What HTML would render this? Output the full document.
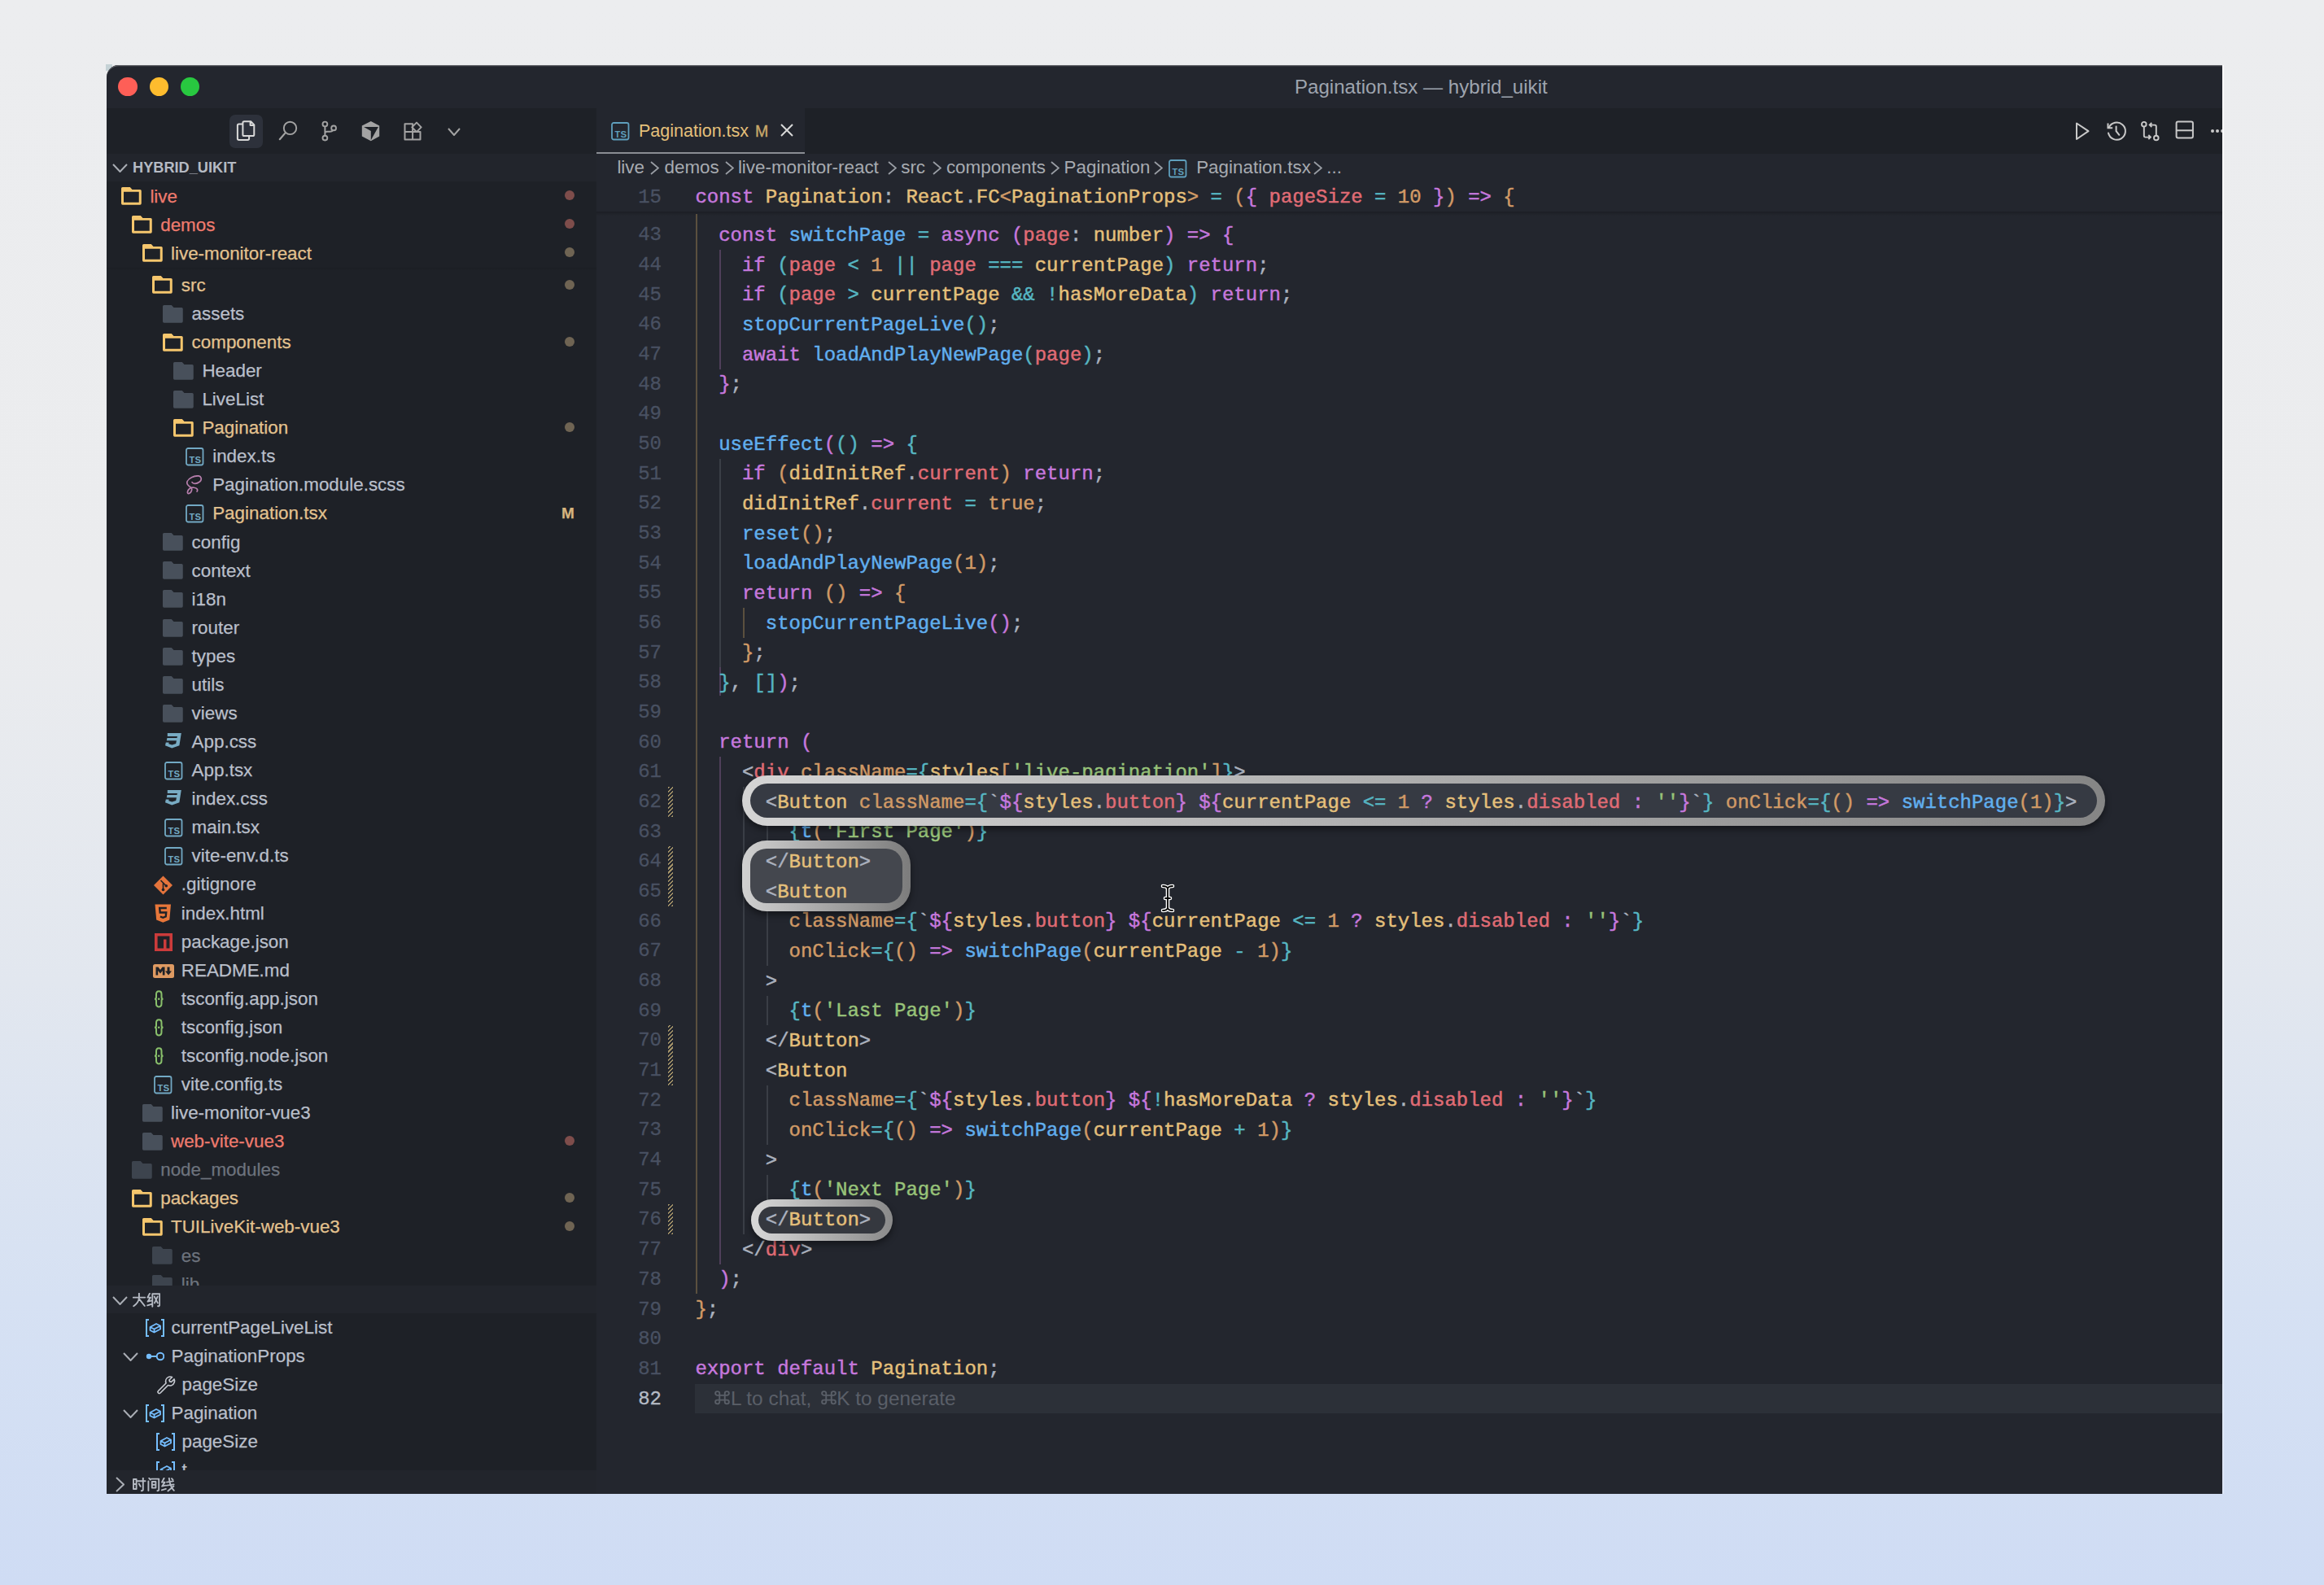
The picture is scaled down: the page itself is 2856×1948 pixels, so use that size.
<!DOCTYPE html><html><head><meta charset="utf-8"><style>
*{margin:0;padding:0;box-sizing:border-box}
html,body{width:2856px;height:1948px;overflow:hidden}
body{position:relative;background:linear-gradient(180deg,#ecedef 0%,#ebecee 38%,#e2e7ef 62%,#d6e1f3 82%,#cfdcf4 100%);font-family:"Liberation Sans",sans-serif}
.a{position:absolute}
.code{position:absolute;left:854.4px;height:36.67px;line-height:36.67px;margin-top:1.7px;font-family:"Liberation Mono",monospace;font-size:24px;white-space:pre;color:#abb2bf;-webkit-text-stroke:0.45px currentColor}
.ln{position:absolute;left:713px;width:100px;text-align:right;height:36.67px;line-height:36.67px;margin-top:1.2px;-webkit-text-stroke:0.3px currentColor;font-family:"Liberation Mono",monospace;font-size:24px;color:#495162}
.row{position:absolute;height:35.2px;line-height:35.2px;font-size:22.4px;white-space:pre;color:#abb2bf;-webkit-text-stroke:0.25px currentColor}
.dot{position:absolute;width:12px;height:12px;border-radius:6px}
.guide{position:absolute;width:2px}
.code b{display:inline-block;width:14.4px;font-weight:normal}
.hatch{position:absolute;left:821px;width:5.5px;background:repeating-linear-gradient(-45deg,rgba(205,182,124,0.75) 0 1.6px,rgba(0,0,0,0) 1.6px 3.6px)}
.kw{color:#c678dd}.fn{color:#61afef}.va{color:#e06c75}.ty{color:#e5c07b}.op{color:#56b6c2}.nu{color:#d19a66}.st{color:#98c379}.pu{color:#abb2bf}.b1{color:#d19a66}.b2{color:#c678dd}.b3{color:#56b6c2}.sp{color:#abb2bf}.or{color:#d19a66}</style></head><body><div class="a" style="left:130px;top:79px;width:8px;height:8px;background:#c5d2d6"></div><div class="a" style="left:2731px;top:80px;width:1.5px;height:1756px;background:linear-gradient(rgba(255,255,255,0.75),rgba(255,255,255,0.25))"></div><div class="a" style="left:131px;top:80px;width:2600px;height:1755.7px;background:#23262e;border-top-left-radius:15px;overflow:hidden"></div><div class="a" style="left:131px;top:80px;width:2600px;height:53px;background:#23262e;border-top-left-radius:15px;box-shadow:inset 0 1.2px 0 rgba(150,150,155,0.55)"></div><div class="a" style="left:145.4px;top:94.60000000000001px;width:23.2px;height:23.2px;border-radius:50%;background:#fe5f57"></div><div class="a" style="left:183.9px;top:94.60000000000001px;width:23.2px;height:23.2px;border-radius:50%;background:#febc2e"></div><div class="a" style="left:222.0px;top:94.60000000000001px;width:23.2px;height:23.2px;border-radius:50%;background:#28c840"></div><div class="a" style="left:1591px;top:92px;height:30px;line-height:30px;font-size:24.1px;color:#9ea4ae;white-space:pre">Pagination.tsx — hybrid_uikit</div><div class="a" style="left:131px;top:133px;width:602px;height:1702.7px;background:#1e2127"></div><div class="a" style="left:131px;top:189px;width:602px;height:34px;background:#22252c"></div><div class="a" style="left:163px;top:189px;height:34px;line-height:34px;font-size:18.2px;font-weight:bold;color:#b5bac3">HYBRID_UIKIT</div><div class="a" style="left:131px;top:223px;width:602px;height:1356.5px;overflow:hidden"><div class="a" style="left:-131px;top:-223px;width:2856px;height:1948px"><svg class="a" style="left:187.3px;top:339.40000000000003px" width="25" height="22" viewBox="0 0 25 22"><path fill="#f5c66d" fill-rule="evenodd" d="M1.6 0H10.8L13.5 3H23.1Q24.75 3 24.75 4.6V20.1Q24.75 21.7 23.1 21.7H1.6Q0 21.7 0 20.1V1.6Q0 0 1.6 0Z M3 5.8H21.75V18.7H3Z"/></svg><div class="row" style="left:222.8px;top:332.80px;color:#e3c28f">src</div><div class="dot" style="left:693.7px;top:343.60px;background:#6f6453"></div><svg class="a" style="left:200.10000000000002px;top:374.68px" width="25" height="22" viewBox="0 0 25 22"><path fill="#48505b" d="M1.6 0H10.8L13.5 3H23.1Q24.75 3 24.75 4.6V20.1Q24.75 21.7 23.1 21.7H1.6Q0 21.7 0 20.1V1.6Q0 0 1.6 0Z"/></svg><div class="row" style="left:235.6px;top:367.88px;color:#b9bfca">assets</div><svg class="a" style="left:200.10000000000002px;top:409.56000000000006px" width="25" height="22" viewBox="0 0 25 22"><path fill="#f5c66d" fill-rule="evenodd" d="M1.6 0H10.8L13.5 3H23.1Q24.75 3 24.75 4.6V20.1Q24.75 21.7 23.1 21.7H1.6Q0 21.7 0 20.1V1.6Q0 0 1.6 0Z M3 5.8H21.75V18.7H3Z"/></svg><div class="row" style="left:235.6px;top:402.96px;color:#e3c28f">components</div><div class="dot" style="left:693.7px;top:413.76px;background:#6f6453"></div><svg class="a" style="left:212.9px;top:444.84000000000003px" width="25" height="22" viewBox="0 0 25 22"><path fill="#48505b" d="M1.6 0H10.8L13.5 3H23.1Q24.75 3 24.75 4.6V20.1Q24.75 21.7 23.1 21.7H1.6Q0 21.7 0 20.1V1.6Q0 0 1.6 0Z"/></svg><div class="row" style="left:248.4px;top:438.04px;color:#b9bfca">Header</div><svg class="a" style="left:212.9px;top:479.92px" width="25" height="22" viewBox="0 0 25 22"><path fill="#48505b" d="M1.6 0H10.8L13.5 3H23.1Q24.75 3 24.75 4.6V20.1Q24.75 21.7 23.1 21.7H1.6Q0 21.7 0 20.1V1.6Q0 0 1.6 0Z"/></svg><div class="row" style="left:248.4px;top:473.12px;color:#b9bfca">LiveList</div><svg class="a" style="left:212.9px;top:514.8px" width="25" height="22" viewBox="0 0 25 22"><path fill="#f5c66d" fill-rule="evenodd" d="M1.6 0H10.8L13.5 3H23.1Q24.75 3 24.75 4.6V20.1Q24.75 21.7 23.1 21.7H1.6Q0 21.7 0 20.1V1.6Q0 0 1.6 0Z M3 5.8H21.75V18.7H3Z"/></svg><div class="row" style="left:248.4px;top:508.20px;color:#e3c28f">Pagination</div><div class="dot" style="left:693.7px;top:519.00px;background:#6f6453"></div><svg class="a" style="left:227.50000000000003px;top:550.28px" width="23" height="23" viewBox="0 0 23 23"><rect x="1" y="1" width="20.5" height="20.5" rx="2.2" fill="none" stroke="#72a9c4" stroke-width="1.8"/><text x="4.6" y="18.6" font-family="Liberation Sans" font-weight="bold" font-size="11" fill="#72a9c4">T</text><text x="11.4" y="18.8" font-family="Liberation Sans" font-weight="bold" font-size="11.4" fill="#72a9c4">S</text></svg><div class="row" style="left:261.2px;top:543.28px;color:#b9bfca">index.ts</div><svg class="a" style="left:229.3px;top:584.36px" width="21" height="24" viewBox="0 0 21 24"><path fill="none" stroke="#b67eac" stroke-width="1.7" stroke-linecap="round" d="M7 8.7C8 10.5 12 11.5 16.5 8C19.5 5.5 18.5 0.8 14.5 0.8C9 0.8 3 3.5 1.2 7.5C-0.2 10.5 3 13.5 5.5 15C8 16.5 6 22.5 2.8 22.7C0.7 22.8 0.9 19 4 16.5C7 14.5 12 15 13.2 17C13.8 18 13.5 19.5 13.1 20.1"/></svg><div class="row" style="left:261.2px;top:578.36px;color:#b9bfca">Pagination.module.scss</div><svg class="a" style="left:227.50000000000003px;top:620.44px" width="23" height="23" viewBox="0 0 23 23"><rect x="1" y="1" width="20.5" height="20.5" rx="2.2" fill="none" stroke="#72a9c4" stroke-width="1.8"/><text x="4.6" y="18.6" font-family="Liberation Sans" font-weight="bold" font-size="11" fill="#72a9c4">T</text><text x="11.4" y="18.8" font-family="Liberation Sans" font-weight="bold" font-size="11.4" fill="#72a9c4">S</text></svg><div class="row" style="left:261.2px;top:613.44px;color:#e3c28f">Pagination.tsx</div><div class="row" style="left:690px;top:613.44px;color:#d6b57e;font-weight:bold;font-size:19px">M</div><svg class="a" style="left:200.10000000000002px;top:655.3199999999999px" width="25" height="22" viewBox="0 0 25 22"><path fill="#48505b" d="M1.6 0H10.8L13.5 3H23.1Q24.75 3 24.75 4.6V20.1Q24.75 21.7 23.1 21.7H1.6Q0 21.7 0 20.1V1.6Q0 0 1.6 0Z"/></svg><div class="row" style="left:235.6px;top:648.52px;color:#b9bfca">config</div><svg class="a" style="left:200.10000000000002px;top:690.3999999999999px" width="25" height="22" viewBox="0 0 25 22"><path fill="#48505b" d="M1.6 0H10.8L13.5 3H23.1Q24.75 3 24.75 4.6V20.1Q24.75 21.7 23.1 21.7H1.6Q0 21.7 0 20.1V1.6Q0 0 1.6 0Z"/></svg><div class="row" style="left:235.6px;top:683.60px;color:#b9bfca">context</div><svg class="a" style="left:200.10000000000002px;top:725.48px" width="25" height="22" viewBox="0 0 25 22"><path fill="#48505b" d="M1.6 0H10.8L13.5 3H23.1Q24.75 3 24.75 4.6V20.1Q24.75 21.7 23.1 21.7H1.6Q0 21.7 0 20.1V1.6Q0 0 1.6 0Z"/></svg><div class="row" style="left:235.6px;top:718.68px;color:#b9bfca">i18n</div><svg class="a" style="left:200.10000000000002px;top:760.56px" width="25" height="22" viewBox="0 0 25 22"><path fill="#48505b" d="M1.6 0H10.8L13.5 3H23.1Q24.75 3 24.75 4.6V20.1Q24.75 21.7 23.1 21.7H1.6Q0 21.7 0 20.1V1.6Q0 0 1.6 0Z"/></svg><div class="row" style="left:235.6px;top:753.76px;color:#b9bfca">router</div><svg class="a" style="left:200.10000000000002px;top:795.6399999999999px" width="25" height="22" viewBox="0 0 25 22"><path fill="#48505b" d="M1.6 0H10.8L13.5 3H23.1Q24.75 3 24.75 4.6V20.1Q24.75 21.7 23.1 21.7H1.6Q0 21.7 0 20.1V1.6Q0 0 1.6 0Z"/></svg><div class="row" style="left:235.6px;top:788.84px;color:#b9bfca">types</div><svg class="a" style="left:200.10000000000002px;top:830.72px" width="25" height="22" viewBox="0 0 25 22"><path fill="#48505b" d="M1.6 0H10.8L13.5 3H23.1Q24.75 3 24.75 4.6V20.1Q24.75 21.7 23.1 21.7H1.6Q0 21.7 0 20.1V1.6Q0 0 1.6 0Z"/></svg><div class="row" style="left:235.6px;top:823.92px;color:#b9bfca">utils</div><svg class="a" style="left:200.10000000000002px;top:865.8px" width="25" height="22" viewBox="0 0 25 22"><path fill="#48505b" d="M1.6 0H10.8L13.5 3H23.1Q24.75 3 24.75 4.6V20.1Q24.75 21.7 23.1 21.7H1.6Q0 21.7 0 20.1V1.6Q0 0 1.6 0Z"/></svg><div class="row" style="left:235.6px;top:859.00px;color:#b9bfca">views</div><svg class="a" style="left:203.10000000000002px;top:900.9799999999999px" width="20" height="19" viewBox="0 0 20 19"><path fill="#78abc3" d="M2.8 0H19.8L17.4 15.3L8.3 18.6L0 15.3L0.8 11.5H4.6L4.3 13.2L8.4 14.6L13.2 13.1L13.9 9.3H1.8L2.4 5.9H14.5L14.9 3.9H2.8Z"/></svg><div class="row" style="left:235.6px;top:894.08px;color:#b9bfca">App.css</div><svg class="a" style="left:201.90000000000003px;top:936.1600000000001px" width="23" height="23" viewBox="0 0 23 23"><rect x="1" y="1" width="20.5" height="20.5" rx="2.2" fill="none" stroke="#72a9c4" stroke-width="1.8"/><text x="4.6" y="18.6" font-family="Liberation Sans" font-weight="bold" font-size="11" fill="#72a9c4">T</text><text x="11.4" y="18.8" font-family="Liberation Sans" font-weight="bold" font-size="11.4" fill="#72a9c4">S</text></svg><div class="row" style="left:235.6px;top:929.16px;color:#b9bfca">App.tsx</div><svg class="a" style="left:203.10000000000002px;top:971.14px" width="20" height="19" viewBox="0 0 20 19"><path fill="#78abc3" d="M2.8 0H19.8L17.4 15.3L8.3 18.6L0 15.3L0.8 11.5H4.6L4.3 13.2L8.4 14.6L13.2 13.1L13.9 9.3H1.8L2.4 5.9H14.5L14.9 3.9H2.8Z"/></svg><div class="row" style="left:235.6px;top:964.24px;color:#b9bfca">index.css</div><svg class="a" style="left:201.90000000000003px;top:1006.3199999999999px" width="23" height="23" viewBox="0 0 23 23"><rect x="1" y="1" width="20.5" height="20.5" rx="2.2" fill="none" stroke="#72a9c4" stroke-width="1.8"/><text x="4.6" y="18.6" font-family="Liberation Sans" font-weight="bold" font-size="11" fill="#72a9c4">T</text><text x="11.4" y="18.8" font-family="Liberation Sans" font-weight="bold" font-size="11.4" fill="#72a9c4">S</text></svg><div class="row" style="left:235.6px;top:999.32px;color:#b9bfca">main.tsx</div><svg class="a" style="left:201.90000000000003px;top:1041.3999999999999px" width="23" height="23" viewBox="0 0 23 23"><rect x="1" y="1" width="20.5" height="20.5" rx="2.2" fill="none" stroke="#72a9c4" stroke-width="1.8"/><text x="4.6" y="18.6" font-family="Liberation Sans" font-weight="bold" font-size="11" fill="#72a9c4">T</text><text x="11.4" y="18.8" font-family="Liberation Sans" font-weight="bold" font-size="11.4" fill="#72a9c4">S</text></svg><div class="row" style="left:235.6px;top:1034.40px;color:#b9bfca">vite-env.d.ts</div><svg class="a" style="left:189.10000000000002px;top:1076.18px" width="23" height="24" viewBox="0 0 23 24"><path fill="#e4743c" d="M11.5 0.5L23 12L11.5 23.5L0 12Z"/><path fill="none" stroke="#1e2127" stroke-width="1.6" d="M8.5 6L11.5 9V17M11.5 9L15 12.5"/><circle cx="11.5" cy="17.5" r="1.8" fill="#1e2127"/><circle cx="15.3" cy="12.8" r="1.8" fill="#1e2127"/></svg><div class="row" style="left:222.8px;top:1069.48px;color:#b9bfca">.gitignore</div><svg class="a" style="left:190.10000000000002px;top:1110.96px" width="21" height="23" viewBox="0 0 21 23"><path fill="#e8773a" d="M0.5 0.5H20L18.3 19.5L10.3 22.7L2.2 19.5Z"/><path fill="none" stroke="#1e2127" stroke-width="2.4" d="M14.8 5H6.2L6.7 10.5H14.2L13.7 15.5L10.3 16.8L6.9 15.5"/></svg><div class="row" style="left:222.8px;top:1104.56px;color:#b9bfca">index.html</div><svg class="a" style="left:189.9px;top:1147.09px" width="22" height="22" viewBox="0 0 22 22"><rect x="0" y="0" width="22" height="22" fill="#cc3b3b"/><path fill="#1e2127" d="M3.6 3.6H18.4V18.4H14.5V7.5H11V18.4H3.6Z"/></svg><div class="row" style="left:222.8px;top:1139.64px;color:#b9bfca">package.json</div><svg class="a" style="left:187.70000000000002px;top:1185.32px" width="26" height="17" viewBox="0 0 26 17"><rect x="0" y="0" width="26" height="17" rx="2.5" fill="#de9a62"/><path fill="#1e2127" d="M3.5 13.5V3.5H6.5L9 7L11.5 3.5H14.5V13.5H11.8V8L9 11.5L6.2 8V13.5Z"/><path fill="#1e2127" d="M17.5 3.5H20.5V8.5H23L19 13.5L15 8.5H17.5Z"/></svg><div class="row" style="left:222.8px;top:1174.72px;color:#b9bfca">README.md</div><svg class="a" style="left:188.60000000000002px;top:1216.75px" width="13" height="22" viewBox="0 0 13 22"><path fill="none" stroke="#89c06b" stroke-width="2" d="M6.2 1.2C3.5 1.2 3 2.5 3 5V8.5C3 9.8 2 10.8 1 10.8C2 10.8 3 11.8 3 13.1V16.6C3 19.2 3.5 20.4 6.2 20.4C9 20.4 9.5 19.2 9.5 16.6V13.1C9.5 11.8 10.5 10.8 11.5 10.8C10.5 10.8 9.5 9.8 9.5 8.5V5C9.5 2.5 9 1.2 6.2 1.2Z"/><circle cx="6.2" cy="10.8" r="1.3" fill="#89c06b"/></svg><div class="row" style="left:222.8px;top:1209.80px;color:#b9bfca">tsconfig.app.json</div><svg class="a" style="left:188.60000000000002px;top:1251.83px" width="13" height="22" viewBox="0 0 13 22"><path fill="none" stroke="#89c06b" stroke-width="2" d="M6.2 1.2C3.5 1.2 3 2.5 3 5V8.5C3 9.8 2 10.8 1 10.8C2 10.8 3 11.8 3 13.1V16.6C3 19.2 3.5 20.4 6.2 20.4C9 20.4 9.5 19.2 9.5 16.6V13.1C9.5 11.8 10.5 10.8 11.5 10.8C10.5 10.8 9.5 9.8 9.5 8.5V5C9.5 2.5 9 1.2 6.2 1.2Z"/><circle cx="6.2" cy="10.8" r="1.3" fill="#89c06b"/></svg><div class="row" style="left:222.8px;top:1244.88px;color:#b9bfca">tsconfig.json</div><svg class="a" style="left:188.60000000000002px;top:1286.91px" width="13" height="22" viewBox="0 0 13 22"><path fill="none" stroke="#89c06b" stroke-width="2" d="M6.2 1.2C3.5 1.2 3 2.5 3 5V8.5C3 9.8 2 10.8 1 10.8C2 10.8 3 11.8 3 13.1V16.6C3 19.2 3.5 20.4 6.2 20.4C9 20.4 9.5 19.2 9.5 16.6V13.1C9.5 11.8 10.5 10.8 11.5 10.8C10.5 10.8 9.5 9.8 9.5 8.5V5C9.5 2.5 9 1.2 6.2 1.2Z"/><circle cx="6.2" cy="10.8" r="1.3" fill="#89c06b"/></svg><div class="row" style="left:222.8px;top:1279.96px;color:#b9bfca">tsconfig.node.json</div><svg class="a" style="left:189.10000000000002px;top:1322.04px" width="23" height="23" viewBox="0 0 23 23"><rect x="1" y="1" width="20.5" height="20.5" rx="2.2" fill="none" stroke="#72a9c4" stroke-width="1.8"/><text x="4.6" y="18.6" font-family="Liberation Sans" font-weight="bold" font-size="11" fill="#72a9c4">T</text><text x="11.4" y="18.8" font-family="Liberation Sans" font-weight="bold" font-size="11.4" fill="#72a9c4">S</text></svg><div class="row" style="left:222.8px;top:1315.04px;color:#b9bfca">vite.config.ts</div><svg class="a" style="left:174.5px;top:1356.9199999999998px" width="25" height="22" viewBox="0 0 25 22"><path fill="#48505b" d="M1.6 0H10.8L13.5 3H23.1Q24.75 3 24.75 4.6V20.1Q24.75 21.7 23.1 21.7H1.6Q0 21.7 0 20.1V1.6Q0 0 1.6 0Z"/></svg><div class="row" style="left:210.0px;top:1350.12px;color:#b9bfca">live-monitor-vue3</div><svg class="a" style="left:174.5px;top:1391.9999999999998px" width="25" height="22" viewBox="0 0 25 22"><path fill="#48505b" d="M1.6 0H10.8L13.5 3H23.1Q24.75 3 24.75 4.6V20.1Q24.75 21.7 23.1 21.7H1.6Q0 21.7 0 20.1V1.6Q0 0 1.6 0Z"/></svg><div class="row" style="left:210.0px;top:1385.20px;color:#ef7b6e">web-vite-vue3</div><div class="dot" style="left:693.7px;top:1396.00px;background:#7e4d4b"></div><svg class="a" style="left:161.70000000000002px;top:1427.08px" width="25" height="22" viewBox="0 0 25 22"><path fill="#3d444e" d="M1.6 0H10.8L13.5 3H23.1Q24.75 3 24.75 4.6V20.1Q24.75 21.7 23.1 21.7H1.6Q0 21.7 0 20.1V1.6Q0 0 1.6 0Z"/></svg><div class="row" style="left:197.2px;top:1420.28px;color:#6d737d">node_modules</div><svg class="a" style="left:161.70000000000002px;top:1461.9599999999998px" width="25" height="22" viewBox="0 0 25 22"><path fill="#f5c66d" fill-rule="evenodd" d="M1.6 0H10.8L13.5 3H23.1Q24.75 3 24.75 4.6V20.1Q24.75 21.7 23.1 21.7H1.6Q0 21.7 0 20.1V1.6Q0 0 1.6 0Z M3 5.8H21.75V18.7H3Z"/></svg><div class="row" style="left:197.2px;top:1455.36px;color:#e3c28f">packages</div><div class="dot" style="left:693.7px;top:1466.16px;background:#6f6453"></div><svg class="a" style="left:174.5px;top:1497.0399999999997px" width="25" height="22" viewBox="0 0 25 22"><path fill="#f5c66d" fill-rule="evenodd" d="M1.6 0H10.8L13.5 3H23.1Q24.75 3 24.75 4.6V20.1Q24.75 21.7 23.1 21.7H1.6Q0 21.7 0 20.1V1.6Q0 0 1.6 0Z M3 5.8H21.75V18.7H3Z"/></svg><div class="row" style="left:210.0px;top:1490.44px;color:#e3c28f">TUILiveKit-web-vue3</div><div class="dot" style="left:693.7px;top:1501.24px;background:#6f6453"></div><svg class="a" style="left:187.3px;top:1532.32px" width="25" height="22" viewBox="0 0 25 22"><path fill="#3d444e" d="M1.6 0H10.8L13.5 3H23.1Q24.75 3 24.75 4.6V20.1Q24.75 21.7 23.1 21.7H1.6Q0 21.7 0 20.1V1.6Q0 0 1.6 0Z"/></svg><div class="row" style="left:222.8px;top:1525.52px;color:#6d737d">es</div><svg class="a" style="left:187.3px;top:1567.3999999999999px" width="25" height="22" viewBox="0 0 25 22"><path fill="#3d444e" d="M1.6 0H10.8L13.5 3H23.1Q24.75 3 24.75 4.6V20.1Q24.75 21.7 23.1 21.7H1.6Q0 21.7 0 20.1V1.6Q0 0 1.6 0Z"/></svg><div class="row" style="left:222.8px;top:1560.60px;color:#6d737d">lib</div><div class="a" style="left:131px;top:223px;width:602px;height:110.64999999999999px;background:#1e2127"></div><div class="a" style="left:131px;top:328.65px;width:602px;height:3px;background:linear-gradient(rgba(20,22,26,0.25),rgba(22,24,28,0))"></div><svg class="a" style="left:148.9px;top:230.1px" width="25" height="22" viewBox="0 0 25 22"><path fill="#f5c66d" fill-rule="evenodd" d="M1.6 0H10.8L13.5 3H23.1Q24.75 3 24.75 4.6V20.1Q24.75 21.7 23.1 21.7H1.6Q0 21.7 0 20.1V1.6Q0 0 1.6 0Z M3 5.8H21.75V18.7H3Z"/></svg><div class="row" style="left:184.4px;top:223.50px;color:#ef7b6e">live</div><div class="dot" style="left:693.7px;top:234.30px;background:#7e4d4b"></div><svg class="a" style="left:161.70000000000002px;top:265.15000000000003px" width="25" height="22" viewBox="0 0 25 22"><path fill="#f5c66d" fill-rule="evenodd" d="M1.6 0H10.8L13.5 3H23.1Q24.75 3 24.75 4.6V20.1Q24.75 21.7 23.1 21.7H1.6Q0 21.7 0 20.1V1.6Q0 0 1.6 0Z M3 5.8H21.75V18.7H3Z"/></svg><div class="row" style="left:197.2px;top:258.55px;color:#ef7b6e">demos</div><div class="dot" style="left:693.7px;top:269.35px;background:#7e4d4b"></div><svg class="a" style="left:174.5px;top:300.20000000000005px" width="25" height="22" viewBox="0 0 25 22"><path fill="#f5c66d" fill-rule="evenodd" d="M1.6 0H10.8L13.5 3H23.1Q24.75 3 24.75 4.6V20.1Q24.75 21.7 23.1 21.7H1.6Q0 21.7 0 20.1V1.6Q0 0 1.6 0Z M3 5.8H21.75V18.7H3Z"/></svg><div class="row" style="left:210.0px;top:293.60px;color:#e3c28f">live-monitor-react</div><div class="dot" style="left:693.7px;top:304.40px;background:#6f6453"></div></div></div><div class="a" style="left:131px;top:1579.5px;width:602px;height:34.3px;background:#22252c"></div><svg class="a" style="left:137.5px;top:1592.5px" width="19" height="11" viewBox="0 0 19 11"><path fill="none" stroke="#a9adb4" stroke-width="2" d="M1 1L9.5 10L18 1"/></svg><svg class="a" style="left:163px;top:1588.8px" width="34" height="18" viewBox="0 0 34 18"><g fill="none" stroke="#b5bac3" stroke-width="1.9" stroke-linecap="round" stroke-linejoin="round"><path d="M0.8 5.6H15.2M7.9 0.6V6Q7.5 12 1.2 16.2M8.6 8.2L14.8 16"/><g transform="translate(17.4 0)"><path d="M3.6 0.8L1 5.6H4.6L1.2 10.6L5.6 9.6M0.8 15.4L5.8 13.8M6.9 16.8V1.2H15.8V14.6Q15.8 16.4 13.6 16.2M9.4 4.6L13.4 12.4M13.2 4.6L9.6 12.4"/></g></g></svg><div class="a" style="left:131px;top:1613.8px;width:602px;height:193.1px;overflow:hidden"><div class="a" style="left:-131px;top:-1613.8px;width:2856px;height:1948px"><svg class="a" style="left:178.6px;top:1621.0px" width="23" height="22" viewBox="0 0 23 22"><path fill="none" stroke="#75beff" stroke-width="2" d="M4 1H1V21H4M19 1H22V21H19"/><path fill="none" stroke="#75beff" stroke-width="1.8" stroke-linejoin="round" d="M5.5 10L13 6L18 8.5V12.5L10.5 16.5L5.5 14Z M5.5 10L10.5 12.5L18 8.5 M10.5 12.5V16.5"/></svg><div class="row" style="left:210.5px;top:1614.00px;color:#b9bfca">currentPageLiveList</div><svg class="a" style="left:178.6px;top:1656.05px" width="23" height="22" viewBox="0 0 23 22"><circle cx="4" cy="11" r="3.2" fill="#75beff"/><path stroke="#75beff" stroke-width="2" d="M6 11H13"/><circle cx="18" cy="11" r="4.3" fill="none" stroke="#75beff" stroke-width="2"/></svg><svg class="a" style="left:150.5px;top:1662.05px" width="19" height="11" viewBox="0 0 19 11"><path fill="none" stroke="#a9adb4" stroke-width="2" d="M1 1L9.5 10L18 1"/></svg><div class="row" style="left:210.5px;top:1649.05px;color:#b9bfca">PaginationProps</div><svg class="a" style="left:192px;top:1690.1px" width="24" height="24" viewBox="0 0 24 24"><path fill="none" stroke="#c5c9d0" stroke-width="1.7" stroke-linejoin="round" d="M2.5 19.5L12 10C11 7 12 3.5 15.5 2.3C17 1.8 18.5 2 19.5 2.5L16 6L16.6 7.9L18.5 8.5L22 5C22.5 6 22.7 7.5 22.2 9C21 12.5 17.5 13.5 14.5 12.5L5 22C4.3 22.7 3.2 22.7 2.5 22C1.8 21.3 1.8 20.2 2.5 19.5Z"/></svg><div class="row" style="left:223.5px;top:1684.10px;color:#b9bfca">pageSize</div><svg class="a" style="left:178.6px;top:1726.15px" width="23" height="22" viewBox="0 0 23 22"><path fill="none" stroke="#75beff" stroke-width="2" d="M4 1H1V21H4M19 1H22V21H19"/><path fill="none" stroke="#75beff" stroke-width="1.8" stroke-linejoin="round" d="M5.5 10L13 6L18 8.5V12.5L10.5 16.5L5.5 14Z M5.5 10L10.5 12.5L18 8.5 M10.5 12.5V16.5"/></svg><svg class="a" style="left:150.5px;top:1732.15px" width="19" height="11" viewBox="0 0 19 11"><path fill="none" stroke="#a9adb4" stroke-width="2" d="M1 1L9.5 10L18 1"/></svg><div class="row" style="left:210.5px;top:1719.15px;color:#b9bfca">Pagination</div><svg class="a" style="left:192px;top:1761.2px" width="23" height="22" viewBox="0 0 23 22"><path fill="none" stroke="#75beff" stroke-width="2" d="M4 1H1V21H4M19 1H22V21H19"/><path fill="none" stroke="#75beff" stroke-width="1.8" stroke-linejoin="round" d="M5.5 10L13 6L18 8.5V12.5L10.5 16.5L5.5 14Z M5.5 10L10.5 12.5L18 8.5 M10.5 12.5V16.5"/></svg><div class="row" style="left:223.5px;top:1754.20px;color:#b9bfca">pageSize</div><svg class="a" style="left:192px;top:1796.25px" width="23" height="22" viewBox="0 0 23 22"><path fill="none" stroke="#75beff" stroke-width="2" d="M4 1H1V21H4M19 1H22V21H19"/><path fill="none" stroke="#75beff" stroke-width="1.8" stroke-linejoin="round" d="M5.5 10L13 6L18 8.5V12.5L10.5 16.5L5.5 14Z M5.5 10L10.5 12.5L18 8.5 M10.5 12.5V16.5"/></svg><div class="row" style="left:223.5px;top:1789.25px;color:#b9bfca">t</div></div></div><div class="a" style="left:131px;top:1806.9px;width:602px;height:28.8px;background:#22252c"></div><svg class="a" style="left:142px;top:1815px" width="11" height="19" viewBox="0 0 11 19"><path fill="none" stroke="#a9adb4" stroke-width="2" d="M1 1L10 9.5L1 18"/></svg><svg class="a" style="left:163px;top:1815.8px" width="52" height="18" viewBox="0 0 52 18"><g fill="none" stroke="#b5bac3" stroke-width="1.9" stroke-linecap="round" stroke-linejoin="round"><path d="M1 2H4.6V14H1ZM1 8H4.6M6 4.2H15.6M12.8 0.5V14.8Q12.8 16.2 10.8 16.2M7.8 7.6L9.6 10.8"/><g transform="translate(18.2 0)"><path d="M2 0.6L3.6 2.6M1.2 4.4V16M4.8 1.6H14V14.8Q14 16.2 12.2 16.2M5.6 5H10.2V12.6H5.6ZM5.6 8.8H10.2"/></g><g transform="translate(35 0)"><path d="M3.6 0.8L1 5.6H4.6L1.2 10.6L5.6 9.6M0.8 15.4L5.8 13.8M7 5.6L15 4.4M7 9.6L15.6 8.4M9.8 0.8Q11 11 15.8 15.8M15.4 10.6L8.4 16.4M13 1.2L14.4 2.6"/></g></g></svg><div class="a" style="left:281.9px;top:140.9px;width:41.2px;height:41px;border-radius:7px;background:#2d313b"></div><svg class="a" style="left:285px;top:143px" width="36" height="36" viewBox="0 0 36 36"><path fill="none" stroke="#d9d9d9" stroke-width="2" stroke-linejoin="round" d="M13.4 9.4H8.6Q6.9 9.4 6.9 11.1V27.2Q6.9 28.9 8.6 28.9H19.4Q21.1 28.9 21.1 27.2V24.1"/><path fill="none" stroke="#d9d9d9" stroke-width="2" stroke-linejoin="round" d="M15.1 6.3H23.2L27.3 10.4V22.4Q27.3 24.1 25.6 24.1H15.1Q13.4 24.1 13.4 22.4V8Q13.4 6.3 15.1 6.3Z M22.6 6.8V11H26.8"/></svg><svg class="a" style="left:336px;top:140px" width="36" height="36" viewBox="0 0 36 36"><circle cx="20.5" cy="17.4" r="7.7" fill="none" stroke="#a3a3a3" stroke-width="1.9"/><path stroke="#a3a3a3" stroke-width="2.2" stroke-linecap="round" d="M14.6 23.4L7.8 31.2"/></svg><svg class="a" style="left:386px;top:140px" width="36" height="36" viewBox="0 0 36 36"><circle cx="13.4" cy="12.5" r="2.9" fill="none" stroke="#a3a3a3" stroke-width="1.9"/><circle cx="13.4" cy="29.6" r="2.9" fill="none" stroke="#a3a3a3" stroke-width="1.9"/><circle cx="24.1" cy="17.4" r="2.9" fill="none" stroke="#a3a3a3" stroke-width="1.9"/><path fill="none" stroke="#a3a3a3" stroke-width="2" d="M13.4 15.4V26.7M13.4 23.8Q13.4 21.8 16 21.8H19.5Q22 21.8 23.2 20.1"/></svg><svg class="a" style="left:440px;top:146px" width="30" height="30" viewBox="0 0 30 30"><path fill="#a3a3a3" d="M15.8 3L26.2 8.6V21.4L15.8 27.2L4.8 21.4V8.6Z"/><path fill="#1e2127" d="M7.1 10.1H24.9L15.8 26.2V14.9Z"/></svg><svg class="a" style="left:490px;top:146px" width="30" height="30" viewBox="0 0 30 30"><path fill="none" stroke="#a3a3a3" stroke-width="2" stroke-linejoin="round" d="M7.5 6.2H17.1V15.9H26.5V25.6H7.5Z M7.5 15.9H17.1V25.6"/><path fill="none" stroke="#a3a3a3" stroke-width="2" stroke-linejoin="round" d="M22 4.6L27.6 10.4L22 16.1L16.3 10.4Z"/></svg><svg class="a" style="left:549.5px;top:156.5px" width="16" height="10" viewBox="0 0 16 10"><path fill="none" stroke="#a3a3a3" stroke-width="2" d="M1 1L8.0 9L15 1"/></svg><svg class="a" style="left:137.5px;top:201px" width="19" height="11" viewBox="0 0 19 11"><path fill="none" stroke="#a9adb4" stroke-width="2" d="M1 1L9.5 10L18 1"/></svg><div class="a" style="left:733px;top:133px;width:1998px;height:55.5px;background:#1e2127"></div><div class="a" style="left:733px;top:133px;width:256px;height:55.5px;background:#23262e;border-bottom:2px solid #8a8d93"></div><div class="a" style="left:785px;top:145px;height:32px;line-height:32px;font-size:21.5px;color:#e5c07b;white-space:pre">Pagination.tsx</div><div class="a" style="left:928px;top:145px;height:32px;line-height:32px;font-size:19.5px;color:#c9a86a;-webkit-text-stroke:0.4px currentColor">M</div><svg class="a" style="left:2546px;top:146px" width="26" height="30" viewBox="0 0 26 30"><path fill="none" stroke="#c9c9c9" stroke-width="2" stroke-linejoin="round" d="M6 5.5V25L20.5 15.2Z"/></svg><svg class="a" style="left:2586px;top:146px" width="30" height="30" viewBox="0 0 30 30"><path fill="none" stroke="#c9c9c9" stroke-width="2" stroke-linecap="round" d="M5.6 11A10.6 10.6 0 1 1 5 17.5"/><path fill="none" stroke="#c9c9c9" stroke-width="2" d="M4.5 5.5V11.2H10.2"/><path fill="none" stroke="#c9c9c9" stroke-width="2" stroke-linecap="round" d="M14.6 9.5V15.2L18.3 19.8"/></svg><svg class="a" style="left:2627px;top:146px" width="30" height="30" viewBox="0 0 30 30"><circle cx="7.8" cy="6.7" r="2.8" fill="none" stroke="#c9c9c9" stroke-width="1.9"/><circle cx="22.8" cy="23.5" r="2.8" fill="none" stroke="#c9c9c9" stroke-width="1.9"/><path fill="none" stroke="#c9c9c9" stroke-width="1.9" d="M7.8 9.5V20.8Q7.8 22.6 9.6 22.6H15.8M13.3 20L15.9 22.6L13.3 25.2"/><path fill="none" stroke="#c9c9c9" stroke-width="1.9" d="M22.8 20.7V9.4Q22.8 7.6 21 7.6H14.8M17.3 5L14.7 7.6L17.3 10.2"/></svg><svg class="a" style="left:2670px;top:146px" width="30" height="30" viewBox="0 0 30 30"><rect x="4.6" y="3.6" width="20.3" height="19.9" rx="2" fill="none" stroke="#c9c9c9" stroke-width="2"/><path stroke="#c9c9c9" stroke-width="2" d="M4.6 14.3H24.9"/></svg><div class="a" style="left:2700px;top:150px;width:31px;height:20px;overflow:hidden"><div class="a" style="left:16.700000000000273px;top:8.5px;width:4.2px;height:4.2px;border-radius:50%;background:#c9c9c9"></div><div class="a" style="left:23.09999999999991px;top:8.5px;width:4.2px;height:4.2px;border-radius:50%;background:#c9c9c9"></div><div class="a" style="left:29.200000000000273px;top:8.5px;width:4.2px;height:4.2px;border-radius:50%;background:#c9c9c9"></div></div><div class="a" style="left:758.4000000000001px;top:189px;height:34px;line-height:34px;font-size:22.4px;color:#a7abb1;white-space:pre">live</div><div class="a" style="left:816.5px;top:189px;height:34px;line-height:34px;font-size:22.4px;color:#a7abb1;white-space:pre">demos</div><div class="a" style="left:906.9000000000001px;top:189px;height:34px;line-height:34px;font-size:22.4px;color:#a7abb1;white-space:pre">live-monitor-react</div><div class="a" style="left:1107.2px;top:189px;height:34px;line-height:34px;font-size:22.4px;color:#a7abb1;white-space:pre">src</div><div class="a" style="left:1162.9px;top:189px;height:34px;line-height:34px;font-size:22.4px;color:#a7abb1;white-space:pre">components</div><div class="a" style="left:1307.6000000000001px;top:189px;height:34px;line-height:34px;font-size:22.4px;color:#a7abb1;white-space:pre">Pagination</div><div class="a" style="left:1470.2px;top:189px;height:34px;line-height:34px;font-size:22.4px;color:#a7abb1;white-space:pre">Pagination.tsx</div><div class="a" style="left:1630.2px;top:189px;height:34px;line-height:34px;font-size:22.4px;color:#a7abb1;white-space:pre">...</div><svg class="a" style="left:799.4px;top:197.5px" width="11" height="17" viewBox="0 0 11 17"><path fill="none" stroke="#9a9ea5" stroke-width="1.8" d="M1 1L10 8.5L1 16"/></svg><svg class="a" style="left:890.5px;top:197.5px" width="11" height="17" viewBox="0 0 11 17"><path fill="none" stroke="#9a9ea5" stroke-width="1.8" d="M1 1L10 8.5L1 16"/></svg><svg class="a" style="left:1090.9px;top:197.5px" width="11" height="17" viewBox="0 0 11 17"><path fill="none" stroke="#9a9ea5" stroke-width="1.8" d="M1 1L10 8.5L1 16"/></svg><svg class="a" style="left:1145.8px;top:197.5px" width="11" height="17" viewBox="0 0 11 17"><path fill="none" stroke="#9a9ea5" stroke-width="1.8" d="M1 1L10 8.5L1 16"/></svg><svg class="a" style="left:1291.0px;top:197.5px" width="11" height="17" viewBox="0 0 11 17"><path fill="none" stroke="#9a9ea5" stroke-width="1.8" d="M1 1L10 8.5L1 16"/></svg><svg class="a" style="left:1418.1px;top:197.5px" width="11" height="17" viewBox="0 0 11 17"><path fill="none" stroke="#9a9ea5" stroke-width="1.8" d="M1 1L10 8.5L1 16"/></svg><svg class="a" style="left:1613.5px;top:197.5px" width="11" height="17" viewBox="0 0 11 17"><path fill="none" stroke="#9a9ea5" stroke-width="1.8" d="M1 1L10 8.5L1 16"/></svg><svg class="a" style="left:1435.5px;top:195.5px" width="23" height="23" viewBox="0 0 23 23"><rect x="1" y="1" width="20.5" height="20.5" rx="2.2" fill="none" stroke="#5f9fbd" stroke-width="1.8"/><text x="4.6" y="18.6" font-family="Liberation Sans" font-weight="bold" font-size="11" fill="#5f9fbd">T</text><text x="11.4" y="18.8" font-family="Liberation Sans" font-weight="bold" font-size="11.4" fill="#5f9fbd">S</text></svg><svg class="a" style="left:750.5px;top:149.5px" width="23" height="23" viewBox="0 0 23 23"><rect x="1" y="1" width="20.5" height="20.5" rx="2.2" fill="none" stroke="#5f9fbd" stroke-width="1.8"/><text x="4.6" y="18.6" font-family="Liberation Sans" font-weight="bold" font-size="11" fill="#5f9fbd">T</text><text x="11.4" y="18.8" font-family="Liberation Sans" font-weight="bold" font-size="11.4" fill="#5f9fbd">S</text></svg><svg class="a" style="left:956px;top:149px" width="22" height="22" viewBox="0 0 22 22"><path stroke="#d8d8d8" stroke-width="2" d="M4 4L18 18M18 4L4 18"/></svg><div class="ln" style="top:223.7px">15</div><div class="code" style="top:223.7px"><span class="kw"><b>c</b><b>o</b><b>n</b><b>s</b><b>t</b></span><b> </b><span class="ty"><b>P</b><b>a</b><b>g</b><b>i</b><b>n</b><b>a</b><b>t</b><b>i</b><b>o</b><b>n</b></span><span class="pu"><b>:</b></span><b> </b><span class="ty"><b>R</b><b>e</b><b>a</b><b>c</b><b>t</b></span><span class="pu"><b>.</b></span><span class="ty"><b>F</b><b>C</b></span><span class="b1"><b>&lt;</b></span><span class="ty"><b>P</b><b>a</b><b>g</b><b>i</b><b>n</b><b>a</b><b>t</b><b>i</b><b>o</b><b>n</b><b>P</b><b>r</b><b>o</b><b>p</b><b>s</b></span><span class="b1"><b>&gt;</b></span><b> </b><span class="op"><b>=</b></span><b> </b><span class="b1"><b>(</b></span><span class="b2"><b>{</b></span><b> </b><span class="va"><b>p</b><b>a</b><b>g</b><b>e</b><b>S</b><b>i</b><b>z</b><b>e</b></span><b> </b><span class="op"><b>=</b></span><b> </b><span class="nu"><b>1</b><b>0</b></span><b> </b><span class="b2"><b>}</b></span><span class="b1"><b>)</b></span><b> </b><span class="kw"><b>=</b><b>&gt;</b></span><b> </b><span class="b1"><b>{</b></span></div><div class="a" style="left:733px;top:260px;width:1998px;height:5px;background:linear-gradient(rgba(0,0,0,0.22),rgba(0,0,0,0))"></div><div class="a" style="left:854.4px;top:1700.8px;width:1876.6px;height:36px;background:#2c3038"></div><svg class="a" style="left:878.3px;top:1709.4px" width="20" height="18.5" viewBox="0 0 20 18.5"><g transform="scale(1.1176470588235294 1.0294117647058822)"><path fill="none" stroke="#5a5f68" stroke-width="1.7" d="M5.6 5.6V3.3A2.3 2.3 0 1 0 3.3 5.6H13.7A2.3 2.3 0 1 0 11.4 3.3V13.7A2.3 2.3 0 1 0 13.7 11.4H3.3A2.3 2.3 0 1 0 5.6 13.7Z"/></g></svg><svg class="a" style="left:1008.5px;top:1709.4px" width="20" height="18.5" viewBox="0 0 20 18.5"><g transform="scale(1.1176470588235294 1.0294117647058822)"><path fill="none" stroke="#5a5f68" stroke-width="1.7" d="M5.6 5.6V3.3A2.3 2.3 0 1 0 3.3 5.6H13.7A2.3 2.3 0 1 0 11.4 3.3V13.7A2.3 2.3 0 1 0 13.7 11.4H3.3A2.3 2.3 0 1 0 5.6 13.7Z"/></g></svg><div class="a" style="left:897.9px;top:1700.5px;height:36.67px;line-height:36.67px;font-size:24.4px;color:#5a5f68;white-space:pre">L to chat,</div><div class="a" style="left:1028.2px;top:1700.5px;height:36.67px;line-height:36.67px;font-size:24.4px;color:#5a5f68;white-space:pre">K to generate</div><div class="guide" style="left:855.2px;top:263.0px;height:1327.3px;background:#5b503e"></div><div class="guide" style="left:884.0px;top:306.9px;height:146.7px;background:#4f3f5a"></div><div class="guide" style="left:884.0px;top:563.6px;height:256.7px;background:#3a3e46"></div><div class="guide" style="left:884.0px;top:820.2px;height:34.7px;background:#4f3f5a"></div><div class="guide" style="left:884.0px;top:930.3px;height:623.4px;background:#4f3f5a"></div><div class="guide" style="left:912.8px;top:746.9px;height:36.7px;background:#5b503e"></div><div class="guide" style="left:912.8px;top:966.9px;height:550.1px;background:#3a3e46"></div><div class="guide" style="left:941.6px;top:1003.6px;height:36.7px;background:#3a3e46"></div><div class="guide" style="left:941.6px;top:1113.6px;height:73.3px;background:#3a3e46"></div><div class="guide" style="left:941.6px;top:1223.6px;height:36.7px;background:#3a3e46"></div><div class="guide" style="left:941.6px;top:1333.6px;height:73.3px;background:#3a3e46"></div><div class="guide" style="left:941.6px;top:1443.6px;height:36.7px;background:#3a3e46"></div><div class="hatch" style="top:966.9px;height:36.7px"></div><div class="hatch" style="top:1040.3px;height:73.3px"></div><div class="hatch" style="top:1260.3px;height:73.3px"></div><div class="hatch" style="top:1480.3px;height:36.7px"></div><div class="ln" style="top:270.20px;color:#495162">43</div><div class="code" style="top:270.20px"><b> </b><b> </b><span class="kw"><b>c</b><b>o</b><b>n</b><b>s</b><b>t</b></span><b> </b><span class="fn"><b>s</b><b>w</b><b>i</b><b>t</b><b>c</b><b>h</b><b>P</b><b>a</b><b>g</b><b>e</b></span><b> </b><span class="op"><b>=</b></span><b> </b><span class="kw"><b>a</b><b>s</b><b>y</b><b>n</b><b>c</b></span><b> </b><span class="b2"><b>(</b></span><span class="va"><b>p</b><b>a</b><b>g</b><b>e</b></span><span class="pu"><b>:</b></span><b> </b><span class="ty"><b>n</b><b>u</b><b>m</b><b>b</b><b>e</b><b>r</b></span><span class="b2"><b>)</b></span><b> </b><span class="kw"><b>=</b><b>&gt;</b></span><b> </b><span class="b2"><b>{</b></span></div><div class="ln" style="top:306.87px;color:#495162">44</div><div class="code" style="top:306.87px"><b> </b><b> </b><b> </b><b> </b><span class="kw"><b>i</b><b>f</b></span><b> </b><span class="b3"><b>(</b></span><span class="va"><b>p</b><b>a</b><b>g</b><b>e</b></span><b> </b><span class="op"><b>&lt;</b></span><b> </b><span class="nu"><b>1</b></span><b> </b><span class="op"><b>|</b><b>|</b></span><b> </b><span class="va"><b>p</b><b>a</b><b>g</b><b>e</b></span><b> </b><span class="op"><b>=</b><b>=</b><b>=</b></span><b> </b><span class="ty"><b>c</b><b>u</b><b>r</b><b>r</b><b>e</b><b>n</b><b>t</b><b>P</b><b>a</b><b>g</b><b>e</b></span><span class="b3"><b>)</b></span><b> </b><span class="kw"><b>r</b><b>e</b><b>t</b><b>u</b><b>r</b><b>n</b></span><span class="pu"><b>;</b></span></div><div class="ln" style="top:343.54px;color:#495162">45</div><div class="code" style="top:343.54px"><b> </b><b> </b><b> </b><b> </b><span class="kw"><b>i</b><b>f</b></span><b> </b><span class="b3"><b>(</b></span><span class="va"><b>p</b><b>a</b><b>g</b><b>e</b></span><b> </b><span class="op"><b>&gt;</b></span><b> </b><span class="ty"><b>c</b><b>u</b><b>r</b><b>r</b><b>e</b><b>n</b><b>t</b><b>P</b><b>a</b><b>g</b><b>e</b></span><b> </b><span class="op"><b>&amp;</b><b>&amp;</b></span><b> </b><span class="op"><b>!</b></span><span class="ty"><b>h</b><b>a</b><b>s</b><b>M</b><b>o</b><b>r</b><b>e</b><b>D</b><b>a</b><b>t</b><b>a</b></span><span class="b3"><b>)</b></span><b> </b><span class="kw"><b>r</b><b>e</b><b>t</b><b>u</b><b>r</b><b>n</b></span><span class="pu"><b>;</b></span></div><div class="ln" style="top:380.21px;color:#495162">46</div><div class="code" style="top:380.21px"><b> </b><b> </b><b> </b><b> </b><span class="fn"><b>s</b><b>t</b><b>o</b><b>p</b><b>C</b><b>u</b><b>r</b><b>r</b><b>e</b><b>n</b><b>t</b><b>P</b><b>a</b><b>g</b><b>e</b><b>L</b><b>i</b><b>v</b><b>e</b></span><span class="b3"><b>(</b><b>)</b></span><span class="pu"><b>;</b></span></div><div class="ln" style="top:416.88px;color:#495162">47</div><div class="code" style="top:416.88px"><b> </b><b> </b><b> </b><b> </b><span class="kw"><b>a</b><b>w</b><b>a</b><b>i</b><b>t</b></span><b> </b><span class="fn"><b>l</b><b>o</b><b>a</b><b>d</b><b>A</b><b>n</b><b>d</b><b>P</b><b>l</b><b>a</b><b>y</b><b>N</b><b>e</b><b>w</b><b>P</b><b>a</b><b>g</b><b>e</b></span><span class="b3"><b>(</b></span><span class="va"><b>p</b><b>a</b><b>g</b><b>e</b></span><span class="b3"><b>)</b></span><span class="pu"><b>;</b></span></div><div class="ln" style="top:453.55px;color:#495162">48</div><div class="code" style="top:453.55px"><b> </b><b> </b><span class="b2"><b>}</b></span><span class="pu"><b>;</b></span></div><div class="ln" style="top:490.22px;color:#495162">49</div><div class="ln" style="top:526.89px;color:#495162">50</div><div class="code" style="top:526.89px"><b> </b><b> </b><span class="fn"><b>u</b><b>s</b><b>e</b><b>E</b><b>f</b><b>f</b><b>e</b><b>c</b><b>t</b></span><span class="b2"><b>(</b></span><span class="b3"><b>(</b><b>)</b></span><b> </b><span class="kw"><b>=</b><b>&gt;</b></span><b> </b><span class="b3"><b>{</b></span></div><div class="ln" style="top:563.56px;color:#495162">51</div><div class="code" style="top:563.56px"><b> </b><b> </b><b> </b><b> </b><span class="kw"><b>i</b><b>f</b></span><b> </b><span class="b1"><b>(</b></span><span class="ty"><b>d</b><b>i</b><b>d</b><b>I</b><b>n</b><b>i</b><b>t</b><b>R</b><b>e</b><b>f</b></span><span class="pu"><b>.</b></span><span class="va"><b>c</b><b>u</b><b>r</b><b>r</b><b>e</b><b>n</b><b>t</b></span><span class="b1"><b>)</b></span><b> </b><span class="kw"><b>r</b><b>e</b><b>t</b><b>u</b><b>r</b><b>n</b></span><span class="pu"><b>;</b></span></div><div class="ln" style="top:600.23px;color:#495162">52</div><div class="code" style="top:600.23px"><b> </b><b> </b><b> </b><b> </b><span class="ty"><b>d</b><b>i</b><b>d</b><b>I</b><b>n</b><b>i</b><b>t</b><b>R</b><b>e</b><b>f</b></span><span class="pu"><b>.</b></span><span class="va"><b>c</b><b>u</b><b>r</b><b>r</b><b>e</b><b>n</b><b>t</b></span><b> </b><span class="op"><b>=</b></span><b> </b><span class="nu"><b>t</b><b>r</b><b>u</b><b>e</b></span><span class="pu"><b>;</b></span></div><div class="ln" style="top:636.90px;color:#495162">53</div><div class="code" style="top:636.90px"><b> </b><b> </b><b> </b><b> </b><span class="fn"><b>r</b><b>e</b><b>s</b><b>e</b><b>t</b></span><span class="b1"><b>(</b><b>)</b></span><span class="pu"><b>;</b></span></div><div class="ln" style="top:673.57px;color:#495162">54</div><div class="code" style="top:673.57px"><b> </b><b> </b><b> </b><b> </b><span class="fn"><b>l</b><b>o</b><b>a</b><b>d</b><b>A</b><b>n</b><b>d</b><b>P</b><b>l</b><b>a</b><b>y</b><b>N</b><b>e</b><b>w</b><b>P</b><b>a</b><b>g</b><b>e</b></span><span class="b1"><b>(</b></span><span class="nu"><b>1</b></span><span class="b1"><b>)</b></span><span class="pu"><b>;</b></span></div><div class="ln" style="top:710.24px;color:#495162">55</div><div class="code" style="top:710.24px"><b> </b><b> </b><b> </b><b> </b><span class="kw"><b>r</b><b>e</b><b>t</b><b>u</b><b>r</b><b>n</b></span><b> </b><span class="b1"><b>(</b><b>)</b></span><b> </b><span class="kw"><b>=</b><b>&gt;</b></span><b> </b><span class="b1"><b>{</b></span></div><div class="ln" style="top:746.91px;color:#495162">56</div><div class="code" style="top:746.91px"><b> </b><b> </b><b> </b><b> </b><b> </b><b> </b><span class="fn"><b>s</b><b>t</b><b>o</b><b>p</b><b>C</b><b>u</b><b>r</b><b>r</b><b>e</b><b>n</b><b>t</b><b>P</b><b>a</b><b>g</b><b>e</b><b>L</b><b>i</b><b>v</b><b>e</b></span><span class="b2"><b>(</b><b>)</b></span><span class="pu"><b>;</b></span></div><div class="ln" style="top:783.58px;color:#495162">57</div><div class="code" style="top:783.58px"><b> </b><b> </b><b> </b><b> </b><span class="b1"><b>}</b></span><span class="pu"><b>;</b></span></div><div class="ln" style="top:820.25px;color:#495162">58</div><div class="code" style="top:820.25px"><b> </b><b> </b><span class="b3"><b>}</b></span><span class="pu"><b>,</b></span><b> </b><span class="b3"><b>[</b><b>]</b></span><span class="b2"><b>)</b></span><span class="pu"><b>;</b></span></div><div class="ln" style="top:856.92px;color:#495162">59</div><div class="ln" style="top:893.59px;color:#495162">60</div><div class="code" style="top:893.59px"><b> </b><b> </b><span class="kw"><b>r</b><b>e</b><b>t</b><b>u</b><b>r</b><b>n</b></span><b> </b><span class="b2"><b>(</b></span></div><div class="ln" style="top:930.26px;color:#495162">61</div><div class="code" style="top:930.26px"><b> </b><b> </b><b> </b><b> </b><span class="pu"><b>&lt;</b></span><span class="va"><b>d</b><b>i</b><b>v</b></span><b> </b><span class="or"><b>c</b><b>l</b><b>a</b><b>s</b><b>s</b><b>N</b><b>a</b><b>m</b><b>e</b></span><span class="op"><b>=</b></span><span class="b3"><b>{</b></span><span class="ty"><b>s</b><b>t</b><b>y</b><b>l</b><b>e</b><b>s</b></span><span class="b1"><b>[</b></span><span class="st"><b>&#x27;</b><b>l</b><b>i</b><b>v</b><b>e</b><b>-</b><b>p</b><b>a</b><b>g</b><b>i</b><b>n</b><b>a</b><b>t</b><b>i</b><b>o</b><b>n</b><b>&#x27;</b></span><span class="b1"><b>]</b></span><span class="b3"><b>}</b></span><span class="pu"><b>&gt;</b></span></div><div class="ln" style="top:966.93px;color:#495162">62</div><div class="code" style="top:966.93px"><b> </b><b> </b><b> </b><b> </b><b> </b><b> </b><span class="pu"><b>&lt;</b></span><span class="ty"><b>B</b><b>u</b><b>t</b><b>t</b><b>o</b><b>n</b></span><b> </b><span class="or"><b>c</b><b>l</b><b>a</b><b>s</b><b>s</b><b>N</b><b>a</b><b>m</b><b>e</b></span><span class="op"><b>=</b></span><span class="b3"><b>{</b></span><span class="pu"><b>`</b></span><span class="kw"><b>$</b><b>{</b></span><span class="ty"><b>s</b><b>t</b><b>y</b><b>l</b><b>e</b><b>s</b></span><span class="pu"><b>.</b></span><span class="va"><b>b</b><b>u</b><b>t</b><b>t</b><b>o</b><b>n</b></span><span class="kw"><b>}</b></span><b> </b><span class="kw"><b>$</b><b>{</b></span><span class="ty"><b>c</b><b>u</b><b>r</b><b>r</b><b>e</b><b>n</b><b>t</b><b>P</b><b>a</b><b>g</b><b>e</b></span><b> </b><span class="op"><b>&lt;</b><b>=</b></span><b> </b><span class="nu"><b>1</b></span><b> </b><span class="kw"><b>?</b></span><b> </b><span class="ty"><b>s</b><b>t</b><b>y</b><b>l</b><b>e</b><b>s</b></span><span class="pu"><b>.</b></span><span class="va"><b>d</b><b>i</b><b>s</b><b>a</b><b>b</b><b>l</b><b>e</b><b>d</b></span><b> </b><span class="kw"><b>:</b></span><b> </b><span class="st"><b>&#x27;</b><b>&#x27;</b></span><span class="kw"><b>}</b></span><span class="pu"><b>`</b></span><span class="b3"><b>}</b></span><b> </b><span class="or"><b>o</b><b>n</b><b>C</b><b>l</b><b>i</b><b>c</b><b>k</b></span><span class="op"><b>=</b></span><span class="b3"><b>{</b></span><span class="b1"><b>(</b><b>)</b></span><b> </b><span class="kw"><b>=</b><b>&gt;</b></span><b> </b><span class="fn"><b>s</b><b>w</b><b>i</b><b>t</b><b>c</b><b>h</b><b>P</b><b>a</b><b>g</b><b>e</b></span><span class="b1"><b>(</b></span><span class="nu"><b>1</b></span><span class="b1"><b>)</b></span><span class="b3"><b>}</b></span><span class="pu"><b>&gt;</b></span></div><div class="ln" style="top:1003.60px;color:#495162">63</div><div class="code" style="top:1003.60px"><b> </b><b> </b><b> </b><b> </b><b> </b><b> </b><b> </b><b> </b><span class="b3"><b>{</b></span><span class="fn"><b>t</b></span><span class="b1"><b>(</b></span><span class="st"><b>&#x27;</b><b>F</b><b>i</b><b>r</b><b>s</b><b>t</b><b> </b><b>P</b><b>a</b><b>g</b><b>e</b><b>&#x27;</b></span><span class="b1"><b>)</b></span><span class="b3"><b>}</b></span></div><div class="ln" style="top:1040.27px;color:#495162">64</div><div class="code" style="top:1040.27px"><b> </b><b> </b><b> </b><b> </b><b> </b><b> </b><span class="pu"><b>&lt;</b><b>/</b></span><span class="ty"><b>B</b><b>u</b><b>t</b><b>t</b><b>o</b><b>n</b></span><span class="pu"><b>&gt;</b></span></div><div class="ln" style="top:1076.94px;color:#495162">65</div><div class="code" style="top:1076.94px"><b> </b><b> </b><b> </b><b> </b><b> </b><b> </b><span class="pu"><b>&lt;</b></span><span class="ty"><b>B</b><b>u</b><b>t</b><b>t</b><b>o</b><b>n</b></span></div><div class="ln" style="top:1113.61px;color:#495162">66</div><div class="code" style="top:1113.61px"><b> </b><b> </b><b> </b><b> </b><b> </b><b> </b><b> </b><b> </b><span class="or"><b>c</b><b>l</b><b>a</b><b>s</b><b>s</b><b>N</b><b>a</b><b>m</b><b>e</b></span><span class="op"><b>=</b></span><span class="b3"><b>{</b></span><span class="pu"><b>`</b></span><span class="kw"><b>$</b><b>{</b></span><span class="ty"><b>s</b><b>t</b><b>y</b><b>l</b><b>e</b><b>s</b></span><span class="pu"><b>.</b></span><span class="va"><b>b</b><b>u</b><b>t</b><b>t</b><b>o</b><b>n</b></span><span class="kw"><b>}</b></span><b> </b><span class="kw"><b>$</b><b>{</b></span><span class="ty"><b>c</b><b>u</b><b>r</b><b>r</b><b>e</b><b>n</b><b>t</b><b>P</b><b>a</b><b>g</b><b>e</b></span><b> </b><span class="op"><b>&lt;</b><b>=</b></span><b> </b><span class="nu"><b>1</b></span><b> </b><span class="kw"><b>?</b></span><b> </b><span class="ty"><b>s</b><b>t</b><b>y</b><b>l</b><b>e</b><b>s</b></span><span class="pu"><b>.</b></span><span class="va"><b>d</b><b>i</b><b>s</b><b>a</b><b>b</b><b>l</b><b>e</b><b>d</b></span><b> </b><span class="kw"><b>:</b></span><b> </b><span class="st"><b>&#x27;</b><b>&#x27;</b></span><span class="kw"><b>}</b></span><span class="pu"><b>`</b></span><span class="b3"><b>}</b></span></div><div class="ln" style="top:1150.28px;color:#495162">67</div><div class="code" style="top:1150.28px"><b> </b><b> </b><b> </b><b> </b><b> </b><b> </b><b> </b><b> </b><span class="or"><b>o</b><b>n</b><b>C</b><b>l</b><b>i</b><b>c</b><b>k</b></span><span class="op"><b>=</b></span><span class="b3"><b>{</b></span><span class="b1"><b>(</b><b>)</b></span><b> </b><span class="kw"><b>=</b><b>&gt;</b></span><b> </b><span class="fn"><b>s</b><b>w</b><b>i</b><b>t</b><b>c</b><b>h</b><b>P</b><b>a</b><b>g</b><b>e</b></span><span class="b1"><b>(</b></span><span class="ty"><b>c</b><b>u</b><b>r</b><b>r</b><b>e</b><b>n</b><b>t</b><b>P</b><b>a</b><b>g</b><b>e</b></span><b> </b><span class="op"><b>-</b></span><b> </b><span class="nu"><b>1</b></span><span class="b1"><b>)</b></span><span class="b3"><b>}</b></span></div><div class="ln" style="top:1186.95px;color:#495162">68</div><div class="code" style="top:1186.95px"><b> </b><b> </b><b> </b><b> </b><b> </b><b> </b><span class="pu"><b>&gt;</b></span></div><div class="ln" style="top:1223.62px;color:#495162">69</div><div class="code" style="top:1223.62px"><b> </b><b> </b><b> </b><b> </b><b> </b><b> </b><b> </b><b> </b><span class="b3"><b>{</b></span><span class="fn"><b>t</b></span><span class="b1"><b>(</b></span><span class="st"><b>&#x27;</b><b>L</b><b>a</b><b>s</b><b>t</b><b> </b><b>P</b><b>a</b><b>g</b><b>e</b><b>&#x27;</b></span><span class="b1"><b>)</b></span><span class="b3"><b>}</b></span></div><div class="ln" style="top:1260.29px;color:#495162">70</div><div class="code" style="top:1260.29px"><b> </b><b> </b><b> </b><b> </b><b> </b><b> </b><span class="pu"><b>&lt;</b><b>/</b></span><span class="ty"><b>B</b><b>u</b><b>t</b><b>t</b><b>o</b><b>n</b></span><span class="pu"><b>&gt;</b></span></div><div class="ln" style="top:1296.96px;color:#495162">71</div><div class="code" style="top:1296.96px"><b> </b><b> </b><b> </b><b> </b><b> </b><b> </b><span class="pu"><b>&lt;</b></span><span class="ty"><b>B</b><b>u</b><b>t</b><b>t</b><b>o</b><b>n</b></span></div><div class="ln" style="top:1333.63px;color:#495162">72</div><div class="code" style="top:1333.63px"><b> </b><b> </b><b> </b><b> </b><b> </b><b> </b><b> </b><b> </b><span class="or"><b>c</b><b>l</b><b>a</b><b>s</b><b>s</b><b>N</b><b>a</b><b>m</b><b>e</b></span><span class="op"><b>=</b></span><span class="b3"><b>{</b></span><span class="pu"><b>`</b></span><span class="kw"><b>$</b><b>{</b></span><span class="ty"><b>s</b><b>t</b><b>y</b><b>l</b><b>e</b><b>s</b></span><span class="pu"><b>.</b></span><span class="va"><b>b</b><b>u</b><b>t</b><b>t</b><b>o</b><b>n</b></span><span class="kw"><b>}</b></span><b> </b><span class="kw"><b>$</b><b>{</b></span><span class="op"><b>!</b></span><span class="ty"><b>h</b><b>a</b><b>s</b><b>M</b><b>o</b><b>r</b><b>e</b><b>D</b><b>a</b><b>t</b><b>a</b></span><b> </b><span class="kw"><b>?</b></span><b> </b><span class="ty"><b>s</b><b>t</b><b>y</b><b>l</b><b>e</b><b>s</b></span><span class="pu"><b>.</b></span><span class="va"><b>d</b><b>i</b><b>s</b><b>a</b><b>b</b><b>l</b><b>e</b><b>d</b></span><b> </b><span class="kw"><b>:</b></span><b> </b><span class="st"><b>&#x27;</b><b>&#x27;</b></span><span class="kw"><b>}</b></span><span class="pu"><b>`</b></span><span class="b3"><b>}</b></span></div><div class="ln" style="top:1370.30px;color:#495162">73</div><div class="code" style="top:1370.30px"><b> </b><b> </b><b> </b><b> </b><b> </b><b> </b><b> </b><b> </b><span class="or"><b>o</b><b>n</b><b>C</b><b>l</b><b>i</b><b>c</b><b>k</b></span><span class="op"><b>=</b></span><span class="b3"><b>{</b></span><span class="b1"><b>(</b><b>)</b></span><b> </b><span class="kw"><b>=</b><b>&gt;</b></span><b> </b><span class="fn"><b>s</b><b>w</b><b>i</b><b>t</b><b>c</b><b>h</b><b>P</b><b>a</b><b>g</b><b>e</b></span><span class="b1"><b>(</b></span><span class="ty"><b>c</b><b>u</b><b>r</b><b>r</b><b>e</b><b>n</b><b>t</b><b>P</b><b>a</b><b>g</b><b>e</b></span><b> </b><span class="op"><b>+</b></span><b> </b><span class="nu"><b>1</b></span><span class="b1"><b>)</b></span><span class="b3"><b>}</b></span></div><div class="ln" style="top:1406.97px;color:#495162">74</div><div class="code" style="top:1406.97px"><b> </b><b> </b><b> </b><b> </b><b> </b><b> </b><span class="pu"><b>&gt;</b></span></div><div class="ln" style="top:1443.64px;color:#495162">75</div><div class="code" style="top:1443.64px"><b> </b><b> </b><b> </b><b> </b><b> </b><b> </b><b> </b><b> </b><span class="b3"><b>{</b></span><span class="fn"><b>t</b></span><span class="b1"><b>(</b></span><span class="st"><b>&#x27;</b><b>N</b><b>e</b><b>x</b><b>t</b><b> </b><b>P</b><b>a</b><b>g</b><b>e</b><b>&#x27;</b></span><span class="b1"><b>)</b></span><span class="b3"><b>}</b></span></div><div class="ln" style="top:1480.31px;color:#495162">76</div><div class="code" style="top:1480.31px"><b> </b><b> </b><b> </b><b> </b><b> </b><b> </b><span class="pu"><b>&lt;</b><b>/</b></span><span class="ty"><b>B</b><b>u</b><b>t</b><b>t</b><b>o</b><b>n</b></span><span class="pu"><b>&gt;</b></span></div><div class="ln" style="top:1516.98px;color:#495162">77</div><div class="code" style="top:1516.98px"><b> </b><b> </b><b> </b><b> </b><span class="pu"><b>&lt;</b><b>/</b></span><span class="va"><b>d</b><b>i</b><b>v</b></span><span class="pu"><b>&gt;</b></span></div><div class="ln" style="top:1553.65px;color:#495162">78</div><div class="code" style="top:1553.65px"><b> </b><b> </b><span class="b2"><b>)</b></span><span class="pu"><b>;</b></span></div><div class="ln" style="top:1590.32px;color:#495162">79</div><div class="code" style="top:1590.32px"><span class="b1"><b>}</b></span><span class="pu"><b>;</b></span></div><div class="ln" style="top:1626.99px;color:#495162">80</div><div class="ln" style="top:1663.66px;color:#495162">81</div><div class="code" style="top:1663.66px"><span class="kw"><b>e</b><b>x</b><b>p</b><b>o</b><b>r</b><b>t</b></span><b> </b><span class="kw"><b>d</b><b>e</b><b>f</b><b>a</b><b>u</b><b>l</b><b>t</b></span><b> </b><span class="ty"><b>P</b><b>a</b><b>g</b><b>i</b><b>n</b><b>a</b><b>t</b><b>i</b><b>o</b><b>n</b></span><span class="pu"><b>;</b></span></div><div class="ln" style="top:1700.33px;color:#b6bcc6">82</div><div class="a" style="left:912px;top:953px;width:1675.4px;height:62px;border-radius:31.0px;background:linear-gradient(90deg,#d4d4d4,#858585);box-shadow:0 4px 8px rgba(0,0,0,0.45)"><div class="a" style="left:10px;top:10px;right:10px;bottom:10px;border-radius:21.0px;background:#363a43"></div></div><div class="code" style="top:966.93px;z-index:2"><b> </b><b> </b><b> </b><b> </b><b> </b><b> </b><span class="pu"><b>&lt;</b></span><span class="ty"><b>B</b><b>u</b><b>t</b><b>t</b><b>o</b><b>n</b></span><b> </b><span class="or"><b>c</b><b>l</b><b>a</b><b>s</b><b>s</b><b>N</b><b>a</b><b>m</b><b>e</b></span><span class="op"><b>=</b></span><span class="b3"><b>{</b></span><span class="pu"><b>`</b></span><span class="kw"><b>$</b><b>{</b></span><span class="ty"><b>s</b><b>t</b><b>y</b><b>l</b><b>e</b><b>s</b></span><span class="pu"><b>.</b></span><span class="va"><b>b</b><b>u</b><b>t</b><b>t</b><b>o</b><b>n</b></span><span class="kw"><b>}</b></span><b> </b><span class="kw"><b>$</b><b>{</b></span><span class="ty"><b>c</b><b>u</b><b>r</b><b>r</b><b>e</b><b>n</b><b>t</b><b>P</b><b>a</b><b>g</b><b>e</b></span><b> </b><span class="op"><b>&lt;</b><b>=</b></span><b> </b><span class="nu"><b>1</b></span><b> </b><span class="kw"><b>?</b></span><b> </b><span class="ty"><b>s</b><b>t</b><b>y</b><b>l</b><b>e</b><b>s</b></span><span class="pu"><b>.</b></span><span class="va"><b>d</b><b>i</b><b>s</b><b>a</b><b>b</b><b>l</b><b>e</b><b>d</b></span><b> </b><span class="kw"><b>:</b></span><b> </b><span class="st"><b>&#x27;</b><b>&#x27;</b></span><span class="kw"><b>}</b></span><span class="pu"><b>`</b></span><span class="b3"><b>}</b></span><b> </b><span class="or"><b>o</b><b>n</b><b>C</b><b>l</b><b>i</b><b>c</b><b>k</b></span><span class="op"><b>=</b></span><span class="b3"><b>{</b></span><span class="b1"><b>(</b><b>)</b></span><b> </b><span class="kw"><b>=</b><b>&gt;</b></span><b> </b><span class="fn"><b>s</b><b>w</b><b>i</b><b>t</b><b>c</b><b>h</b><b>P</b><b>a</b><b>g</b><b>e</b></span><span class="b1"><b>(</b></span><span class="nu"><b>1</b></span><span class="b1"><b>)</b></span><span class="b3"><b>}</b></span><span class="pu"><b>&gt;</b></span></div><div class="a" style="left:912px;top:1033px;width:206.5px;height:87.40000000000009px;border-radius:30px;background:linear-gradient(90deg,#d0d0d0,#7c7c7c);box-shadow:0 4px 8px rgba(0,0,0,0.45)"><div class="a" style="left:10px;top:10px;right:10px;bottom:10px;border-radius:20px;background:#44474e"></div></div><div class="code" style="top:1040.27px"><b> </b><b> </b><b> </b><b> </b><b> </b><b> </b><span class="pu"><b>&lt;</b><b>/</b></span><span class="ty"><b>B</b><b>u</b><b>t</b><b>t</b><b>o</b><b>n</b></span><span class="pu"><b>&gt;</b></span></div><div class="code" style="top:1076.94px"><b> </b><b> </b><b> </b><b> </b><b> </b><b> </b><span class="pu"><b>&lt;</b></span><span class="ty"><b>B</b><b>u</b><b>t</b><b>t</b><b>o</b><b>n</b></span></div><div class="a" style="left:923.4px;top:1474.3px;width:173.19999999999993px;height:51.200000000000045px;border-radius:25.600000000000023px;background:linear-gradient(90deg,#d8d8d8,#8a8a8a);box-shadow:0 4px 8px rgba(0,0,0,0.45)"><div class="a" style="left:9px;top:9px;right:9px;bottom:9px;border-radius:16.600000000000023px;background:#35383f"></div></div><div class="code" style="top:1480.31px"><b> </b><b> </b><b> </b><b> </b><b> </b><b> </b><span class="pu"><b>&lt;</b><b>/</b></span><span class="ty"><b>B</b><b>u</b><b>t</b><b>t</b><b>o</b><b>n</b></span><span class="pu"><b>&gt;</b></span></div><svg class="a" style="left:1425.6px;top:1085.5px" width="18" height="36" viewBox="0 0 18 36"><path fill="none" stroke="#fff" stroke-width="4.6" stroke-linecap="round" d="M3 3Q8 3 9 6Q10 3 15 3M9 6V30M3 33Q8 33 9 30Q10 33 15 33M6 18H12"/><path fill="none" stroke="#000" stroke-width="1.8" stroke-linecap="round" d="M3 3Q8 3 9 6Q10 3 15 3M9 6V30M3 33Q8 33 9 30Q10 33 15 33M6 18H12"/></svg></body></html>
